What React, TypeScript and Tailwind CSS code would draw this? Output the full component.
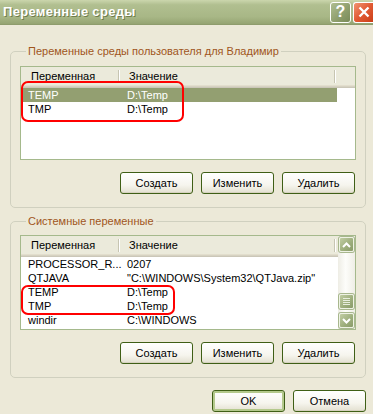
import React from "react";

const font = { fontFamily: '"Liberation Sans", Arial, sans-serif' };

function XPButton({ label, def }: { label: string; def?: boolean }) {
  return (
    <div
      className={
        "w-[73px] h-[22px] rounded-[3px] border border-[#3f5f16] flex items-center justify-center text-[11px] text-black bg-[linear-gradient(to_bottom,#ffffff,#f6f5ee_60%,#e3e0d0)] " +
        (def ? "shadow-[inset_0_0_0_2px_#b4c98c]" : "shadow-[inset_0_-1px_0_#d6d2bf]")
      }
    >
      {label}
    </div>
  );
}

function Header({ width }: { width: number }) {
  return (
    <div className="flex flex-col shrink-0" style={{ width }}>
      <div className="h-[18px] flex bg-[#ebeadb] text-[11px] text-black">
        <div className="w-[99px] flex items-center pl-[10px] relative">
          Переменная
          <div className="absolute right-0 top-[3px] h-[13px] w-[2px] border-l border-[#c7c5b2] border-r border-r-white" />
        </div>
        <div className="w-[216px] flex items-center pl-[9px] relative">
          Значение
          <div className="absolute right-0 top-[3px] h-[13px] w-[2px] border-l border-[#c7c5b2] border-r border-r-white" />
        </div>
        <div className="flex-1" />
      </div>
      <div className="h-[1px] bg-[#e2decd]" />
      <div className="h-[1px] bg-[#d6d2c2]" />
      <div className="h-[1px] bg-[#cbc7b8]" />
    </div>
  );
}

function Row({ a, b, sel }: { a: string; b: string; sel?: boolean }) {
  return (
    <div
      className={
        "h-[14px] flex text-[11px] leading-[14px] w-[316px] " +
        (sel ? "bg-[#939f71] text-white" : "text-black")
      }
    >
      <div className="w-[99px] shrink-0 pl-[7px] whitespace-nowrap">{a}</div>
      <div className="w-[217px] shrink-0 pl-[7px] whitespace-nowrap overflow-hidden">{b}</div>
    </div>
  );
}

function Chevron({ up }: { up?: boolean }) {
  return (
    <svg width="9" height="6" viewBox="0 0 9 6">
      <path
        d={up ? "M1 5 L4.5 1.5 L8 5" : "M1 1 L4.5 4.5 L8 1"}
        fill="none"
        stroke="white"
        strokeWidth="2"
      />
    </svg>
  );
}

function ScrollBtn({ children }: { children: React.ReactNode }) {
  return (
    <div className="h-[17px] p-[1px] pr-[1px]">
      <div className="h-full w-full rounded-[2px] border border-[#eef2e4] bg-[linear-gradient(to_bottom_right,#c1cda3,#9cad7b_60%,#8a9b69)] flex items-center justify-center shadow-[0_0_0_1px_#a8b78d]">
        {children}
      </div>
    </div>
  );
}

function Scrollbar() {
  return (
    <div className="w-[17px] flex flex-col bg-[linear-gradient(to_right,#eeede5,#fdfdfa_45%,#efeee6)]">
      <ScrollBtn>
        <Chevron up />
      </ScrollBtn>
      <div className="flex-1 flex flex-col justify-end pb-[2px]">
        <ScrollBtn>
          <div className="flex flex-col gap-[1px]">
            <div className="w-[7px] h-[1px] bg-[#e8eedd]" />
            <div className="w-[7px] h-[1px] bg-[#e8eedd]" />
            <div className="w-[7px] h-[1px] bg-[#e8eedd]" />
            <div className="w-[7px] h-[1px] bg-[#e8eedd]" />
          </div>
        </ScrollBtn>
      </div>
      <ScrollBtn>
        <Chevron />
      </ScrollBtn>
    </div>
  );
}

function Group({
  label,
  children,
  pt,
}: {
  label: string;
  children: React.ReactNode;
  pt: string;
}) {
  return (
    <fieldset className={"w-[356px] border border-[#d0d0bf] rounded-[5px] px-[9px] pb-[13px] " + pt}>
      <legend className="ml-[6px] px-[2px] text-[11px] leading-[13px] text-[#a0561c]">
        {label}
      </legend>
      {children}
    </fieldset>
  );
}

function Buttons() {
  return (
    <div className="flex justify-end gap-[8px] pr-[1px]">
      <XPButton label="Создать" />
      <XPButton label="Изменить" />
      <XPButton label="Удалить" />
    </div>
  );
}

export default function App() {
  return (
    <div className="w-[373px] h-[414px] bg-[#ece9d8] overflow-hidden" style={font}>
      {/* Title bar */}
      <div className="h-[25px] flex items-center justify-between bg-[linear-gradient(to_bottom,#cbd6ad,#b1bf90_20%,#a8b786_70%,#95a472)] border-b border-[#8e9c6c]">
        <div className="pl-[3px] text-[13px] font-bold text-white tracking-[0.3px] [text-shadow:1px_1px_0_#6f7d4c]">
          Переменные среды
        </div>
        <div className="flex gap-[2px] pr-[0px] items-center">
          <div className="w-[21px] h-[21px] rounded-[3px] border border-white bg-[linear-gradient(to_bottom_right,#b0be92,#8d9d6b_60%,#7a8a58)] flex items-center justify-center text-white font-bold text-[16px] leading-none">
            ?
          </div>
          <div className="w-[20px] h-[21px] rounded-l-[3px] border border-white border-r-0 bg-[linear-gradient(to_bottom_right,#f19572,#e15a33_50%,#cc3f18)] flex items-center justify-center">
            <svg width="12" height="12" viewBox="0 0 12 12">
              <path d="M1.5 1.5 L10.5 10.5 M10.5 1.5 L1.5 10.5" stroke="white" strokeWidth="2.4" />
            </svg>
          </div>
        </div>
      </div>

      <div className="pl-[10px] pt-[20px] flex flex-col">
        <Group label="Переменные среды пользователя для Владимир" pt="pt-[8px]">
          <div className="relative w-[336px] h-[94px] border border-[#a5b98c] bg-white flex flex-col">
            <Header width={334} />
            <Row a="TEMP" b="D:\Temp" sel />
            <Row a="TMP" b="D:\Temp" />
            <div className="absolute left-[0px] top-[14px] w-[163px] h-[41px] border-2 border-[#ff0000] rounded-[7px]" />
          </div>
          <div className="mt-[12px]">
            <Buttons />
          </div>
        </Group>

        <div className="mt-[7px]">
          <Group label="Системные переменные" pt="pt-[7px]">
            <div className="relative w-[336px] h-[95px] border border-[#a5b98c] bg-white flex">
              <div className="flex flex-col w-[317px]">
                <Header width={317} />
                <Row a="PROCESSOR_R..." b="0207" />
                <Row a="QTJAVA" b={'"C:\\WINDOWS\\System32\\QTJava.zip"'} />
                <Row a="TEMP" b="D:\Temp" />
                <Row a="TMP" b="D:\Temp" />
                <Row a="windir" b="C:\WINDOWS" />
              </div>
              <Scrollbar />
              <div className="absolute left-[0px] top-[49px] w-[154px] h-[30px] border-2 border-[#ff0000] rounded-[7px]" />
            </div>
            <div className="mt-[12px]">
              <Buttons />
            </div>
          </Group>
        </div>

        <div className="mt-[12px] w-[356px] flex justify-end gap-[8px]">
          <XPButton label="OK" def />
          <XPButton label="Отмена" />
        </div>
      </div>
    </div>
  );
}
